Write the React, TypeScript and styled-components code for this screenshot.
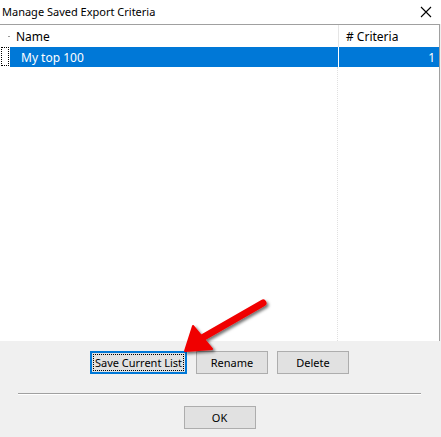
import styled, { createGlobalStyle } from "styled-components";

const GlobalStyle = createGlobalStyle`
  html, body {
    margin: 0;
    padding: 0;
    background: #f0f0f0;
  }
  body {
    font-family: "Noto Sans", "Segoe UI", "Liberation Sans", sans-serif;
    font-size: 11px;
    color: #000;
  }
`;

type Criteria = { name: string; count: number };

const savedLists: Criteria[] = [{ name: "My top 100", count: 1 }];

export default function App() {
  return (
    <>
      <GlobalStyle />
      <Dialog>
        <TitleBar>
          <span>Manage Saved Export Criteria</span>
          <CloseButton aria-label="Close">
            <svg width="12" height="12" viewBox="0 0 12 12">
              <path d="M1 1 L11 11 M11 1 L1 11" stroke="#000" strokeWidth="1.1" />
            </svg>
          </CloseButton>
        </TitleBar>

        <ListView>
          <HeaderRow>
            <Gutter>
              <SortTick />
            </Gutter>
            <HeaderCell>Name</HeaderCell>
            <HeaderCell $last>
              # Criteria
            </HeaderCell>
          </HeaderRow>
          {savedLists.map((item) => (
            <Row key={item.name}>
              <Gutter>
                <FocusMark />
              </Gutter>
              <NameCell>{item.name}</NameCell>
              <CountCell>{item.count}</CountCell>
            </Row>
          ))}
          <EmptyArea>
            <EmptyName />
            <EmptyCount />
          </EmptyArea>
        </ListView>

        <ActionRow>
          <Button $width={97} $focused>
            <FocusLabel>Save Current List</FocusLabel>
          </Button>
          <Button $width={72}>Rename</Button>
          <Button $width={72}>Delete</Button>
        </ActionRow>

        <Divider />

        <FooterRow>
          <Button $width={72}>OK</Button>
        </FooterRow>

        <Pointer width="110" height="70" viewBox="0 0 110 70">
          <defs>
            <filter id="shade" x="-20%" y="-20%" width="150%" height="150%">
              <feDropShadow dx="2" dy="2" stdDeviation="1.6" floodColor="#000" floodOpacity="0.55" />
            </filter>
          </defs>
          <g filter="url(#shade)">
            <path
              d="M91 9 L30 44"
              stroke="#f00000"
              strokeWidth="7"
              strokeLinecap="round"
            />
            <path d="M13 57 L21 32 L40 55 Z" fill="#f00000" stroke="#f00000" strokeWidth="2" strokeLinejoin="round" />
          </g>
        </Pointer>
      </Dialog>
    </>
  );
}

const Dialog = styled.div`
  position: relative;
  display: flex;
  flex-direction: column;
  width: 441px;
  height: 437px;
  background: #f0f0f0;
  overflow: hidden;
`;

const TitleBar = styled.div`
  display: flex;
  align-items: center;
  justify-content: space-between;
  height: 24px;
  padding: 0 8px 0 2px;
  background: #fff;
  box-sizing: border-box;
  white-space: nowrap;

  span {
    font-size: 11px;
    margin-top: -1px;
  }
`;

const CloseButton = styled.button`
  display: flex;
  align-items: center;
  justify-content: center;
  width: 14px;
  height: 14px;
  padding: 0;
  border: none;
  background: transparent;
`;

const ListView = styled.div`
  display: flex;
  flex-direction: column;
  width: 440px;
  height: 317px;
  background: #fff;
  border-top: 1px solid #a0a0a0;
  border-right: 1px solid #a0a0a0;
  box-sizing: border-box;
`;

const HeaderRow = styled.div`
  display: grid;
  grid-template-columns: 10px 328px 1fr;
  height: 22px;
`;

const Gutter = styled.div`
  position: relative;
  display: flex;
  align-items: center;
  justify-content: flex-end;
`;

const SortTick = styled.div`
  width: 2px;
  height: 1px;
  background: #9a9a9a;
`;

const HeaderCell = styled.div<{ $last?: boolean }>`
  display: flex;
  align-items: center;
  padding-left: ${(p) => (p.$last ? "7px" : "6px")};
  border-left: ${(p) => (p.$last ? "1px solid #e5e5e5" : "none")};
  font-size: 12px;
  white-space: nowrap;
`;

const Row = styled.div`
  display: grid;
  grid-template-columns: 10px 328px 1fr;
  height: 20px;
  color: #fff;
  font-size: 12px;
`;

const FocusMark = styled.div`
  position: absolute;
  left: 1px;
  top: 0;
  width: 8px;
  height: 19px;
  border: 1px dotted #000;
  box-sizing: border-box;
`;

const NameCell = styled.div`
  display: flex;
  align-items: center;
  padding-left: 11px;
  background: #0078d7;
`;

const CountCell = styled.div`
  display: flex;
  align-items: center;
  justify-content: flex-end;
  padding-right: 4px;
  background: #0078d7;
  border-left: 1px solid #fff;
`;

const EmptyArea = styled.div`
  display: grid;
  grid-template-columns: 338px 1fr;
  flex: 1;
`;

const EmptyName = styled.div`
  border-right: 1px dotted #e0e0e0;
`;

const EmptyCount = styled.div``;

const ActionRow = styled.div`
  display: flex;
  justify-content: center;
  gap: 9px;
  margin-top: 10px;
  margin-left: -2px;
`;

const Button = styled.button<{ $width: number; $focused?: boolean }>`
  display: flex;
  align-items: center;
  justify-content: center;
  width: ${(p) => p.$width}px;
  height: 23px;
  padding: 0;
  background: #e1e1e1;
  border: ${(p) => (p.$focused ? "2px solid #0078d7" : "1px solid #adadad")};
  font-family: inherit;
  font-size: 11px;
  color: #000;
  white-space: nowrap;
  box-sizing: border-box;
`;

const FocusLabel = styled.span`
  display: flex;
  align-items: center;
  justify-content: center;
  width: calc(100% - 2px);
  height: calc(100% - 2px);
  outline: 1px dotted #000;
  outline-offset: -1px;
`;

const Divider = styled.div`
  height: 1px;
  margin: 19px 20px 0 18px;
  background: #a0a0a0;
  border-bottom: 1px solid #fff;
`;

const FooterRow = styled.div`
  display: flex;
  justify-content: center;
  margin-top: 11px;
  margin-left: -2px;
`;

const Pointer = styled.svg`
  position: absolute;
  left: 172px;
  top: 294px;
  overflow: visible;
`;
